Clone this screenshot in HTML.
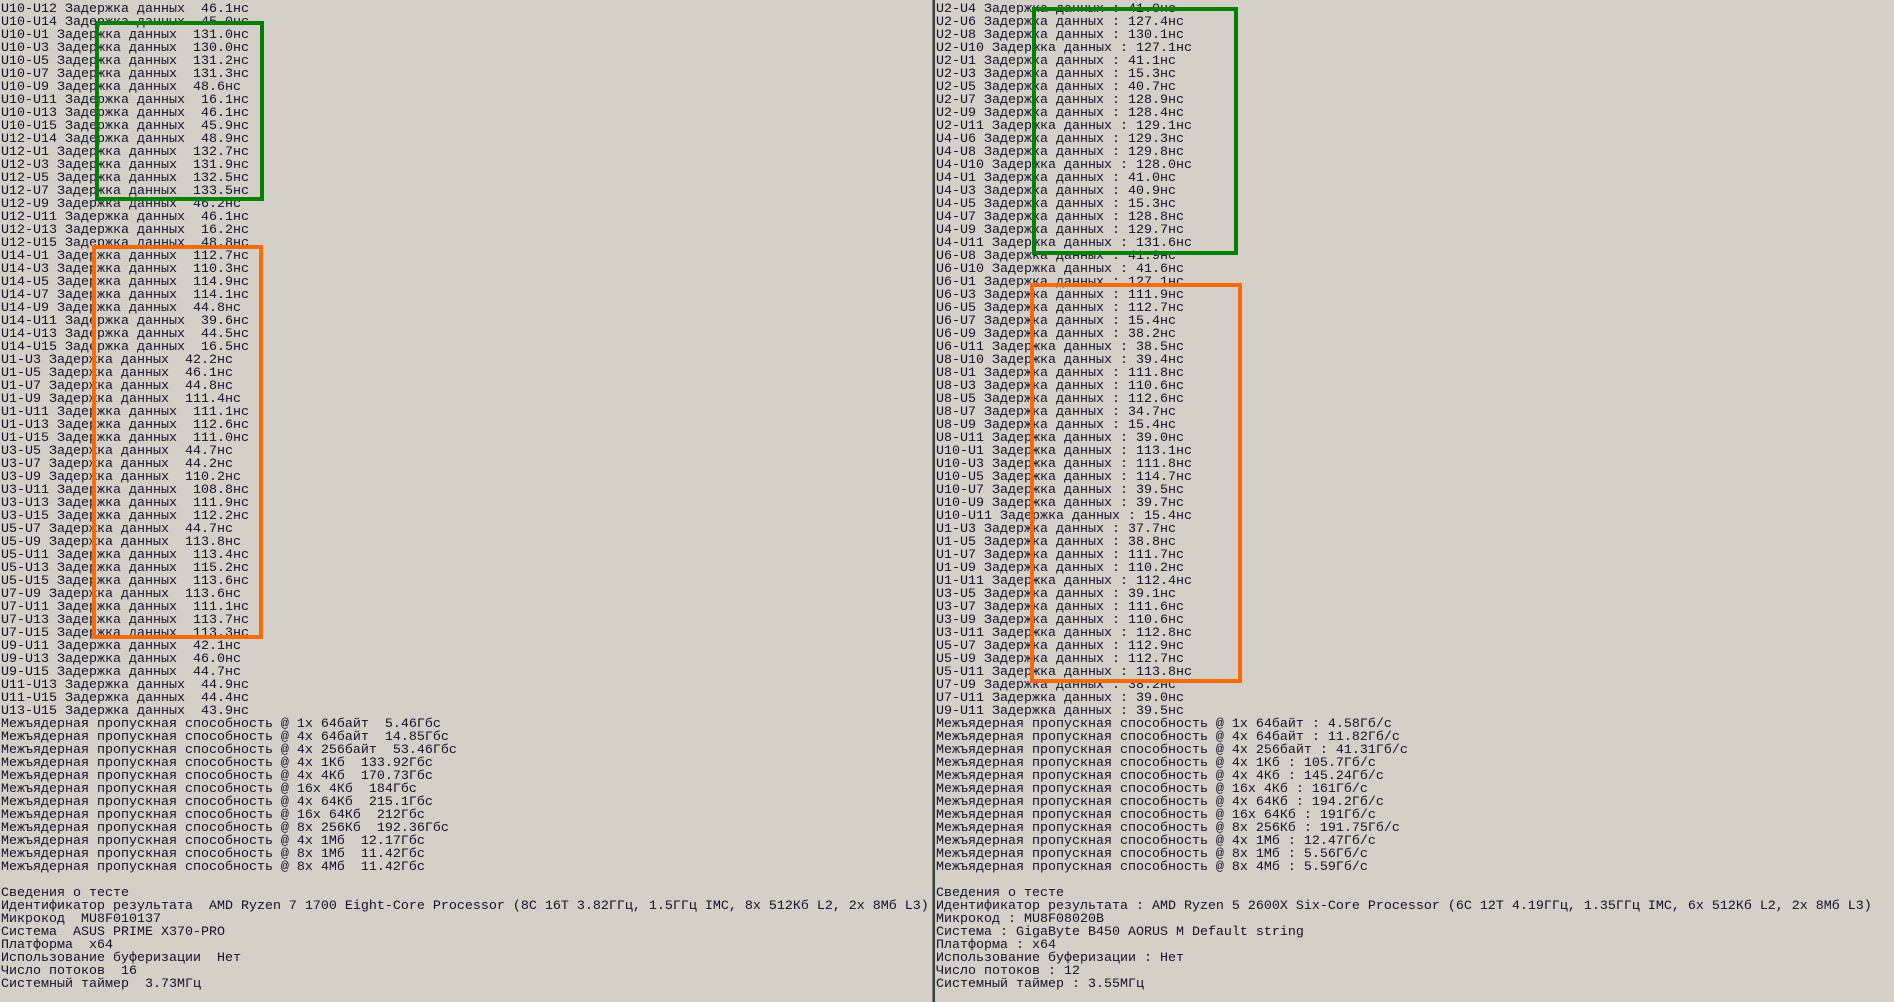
<!DOCTYPE html>
<html><head><meta charset="utf-8"><style>
html,body{margin:0;padding:0;}
body{width:1894px;height:1002px;background:#d4d0c8;position:relative;overflow:hidden;}
pre{position:absolute;top:3px;margin:0;font-family:"Liberation Mono","DejaVu Sans Mono",monospace;font-size:13.33px;line-height:13px;color:#10102a;white-space:pre;}
#l{left:1px;}
#r{left:936px;}
.div{position:absolute;left:932px;top:0;width:1px;height:1002px;background:#808080;}
.div2{position:absolute;left:933px;top:0;width:2px;height:1002px;background:#404040;}
.box{position:absolute;box-sizing:border-box;border:4px solid;}
.g{border-color:#008000;}
.o{border-color:#ff6a00;}
</style></head><body>
<div class="div"></div><div class="div2"></div>
<pre id="l">U10-U12 Задержка данных  46.1нс
U10-U14 Задержка данных  45.0нс
U10-U1 Задержка данных  131.0нс
U10-U3 Задержка данных  130.0нс
U10-U5 Задержка данных  131.2нс
U10-U7 Задержка данных  131.3нс
U10-U9 Задержка данных  48.6нс
U10-U11 Задержка данных  16.1нс
U10-U13 Задержка данных  46.1нс
U10-U15 Задержка данных  45.9нс
U12-U14 Задержка данных  48.9нс
U12-U1 Задержка данных  132.7нс
U12-U3 Задержка данных  131.9нс
U12-U5 Задержка данных  132.5нс
U12-U7 Задержка данных  133.5нс
U12-U9 Задержка данных  46.2нс
U12-U11 Задержка данных  46.1нс
U12-U13 Задержка данных  16.2нс
U12-U15 Задержка данных  48.8нс
U14-U1 Задержка данных  112.7нс
U14-U3 Задержка данных  110.3нс
U14-U5 Задержка данных  114.9нс
U14-U7 Задержка данных  114.1нс
U14-U9 Задержка данных  44.8нс
U14-U11 Задержка данных  39.6нс
U14-U13 Задержка данных  44.5нс
U14-U15 Задержка данных  16.5нс
U1-U3 Задержка данных  42.2нс
U1-U5 Задержка данных  46.1нс
U1-U7 Задержка данных  44.8нс
U1-U9 Задержка данных  111.4нс
U1-U11 Задержка данных  111.1нс
U1-U13 Задержка данных  112.6нс
U1-U15 Задержка данных  111.0нс
U3-U5 Задержка данных  44.7нс
U3-U7 Задержка данных  44.2нс
U3-U9 Задержка данных  110.2нс
U3-U11 Задержка данных  108.8нс
U3-U13 Задержка данных  111.9нс
U3-U15 Задержка данных  112.2нс
U5-U7 Задержка данных  44.7нс
U5-U9 Задержка данных  113.8нс
U5-U11 Задержка данных  113.4нс
U5-U13 Задержка данных  115.2нс
U5-U15 Задержка данных  113.6нс
U7-U9 Задержка данных  113.6нс
U7-U11 Задержка данных  111.1нс
U7-U13 Задержка данных  113.7нс
U7-U15 Задержка данных  113.3нс
U9-U11 Задержка данных  42.1нс
U9-U13 Задержка данных  46.0нс
U9-U15 Задержка данных  44.7нс
U11-U13 Задержка данных  44.9нс
U11-U15 Задержка данных  44.4нс
U13-U15 Задержка данных  43.9нс
Межъядерная пропускная способность @ 1x 64байт  5.46Гбс
Межъядерная пропускная способность @ 4x 64байт  14.85Гбс
Межъядерная пропускная способность @ 4x 256байт  53.46Гбс
Межъядерная пропускная способность @ 4x 1Кб  133.92Гбс
Межъядерная пропускная способность @ 4x 4Кб  170.73Гбс
Межъядерная пропускная способность @ 16x 4Кб  184Гбс
Межъядерная пропускная способность @ 4x 64Кб  215.1Гбс
Межъядерная пропускная способность @ 16x 64Кб  212Гбс
Межъядерная пропускная способность @ 8x 256Кб  192.36Гбс
Межъядерная пропускная способность @ 4x 1Мб  12.17Гбс
Межъядерная пропускная способность @ 8x 1Мб  11.42Гбс
Межъядерная пропускная способность @ 8x 4Мб  11.42Гбс

Сведения о тесте
Идентификатор результата  AMD Ryzen 7 1700 Eight-Core Processor (8C 16T 3.82ГГц, 1.5ГГц IMC, 8x 512Кб L2, 2x 8Мб L3)
Микрокод  MU8F010137
Система  ASUS PRIME X370-PRO
Платформа  x64
Использование буферизации  Нет
Число потоков  16
Системный таймер  3.73МГц</pre>
<pre id="r">U2-U4 Задержка данных : 41.0нс
U2-U6 Задержка данных : 127.4нс
U2-U8 Задержка данных : 130.1нс
U2-U10 Задержка данных : 127.1нс
U2-U1 Задержка данных : 41.1нс
U2-U3 Задержка данных : 15.3нс
U2-U5 Задержка данных : 40.7нс
U2-U7 Задержка данных : 128.9нс
U2-U9 Задержка данных : 128.4нс
U2-U11 Задержка данных : 129.1нс
U4-U6 Задержка данных : 129.3нс
U4-U8 Задержка данных : 129.8нс
U4-U10 Задержка данных : 128.0нс
U4-U1 Задержка данных : 41.0нс
U4-U3 Задержка данных : 40.9нс
U4-U5 Задержка данных : 15.3нс
U4-U7 Задержка данных : 128.8нс
U4-U9 Задержка данных : 129.7нс
U4-U11 Задержка данных : 131.6нс
U6-U8 Задержка данных : 41.9нс
U6-U10 Задержка данных : 41.6нс
U6-U1 Задержка данных : 127.1нс
U6-U3 Задержка данных : 111.9нс
U6-U5 Задержка данных : 112.7нс
U6-U7 Задержка данных : 15.4нс
U6-U9 Задержка данных : 38.2нс
U6-U11 Задержка данных : 38.5нс
U8-U10 Задержка данных : 39.4нс
U8-U1 Задержка данных : 111.8нс
U8-U3 Задержка данных : 110.6нс
U8-U5 Задержка данных : 112.6нс
U8-U7 Задержка данных : 34.7нс
U8-U9 Задержка данных : 15.4нс
U8-U11 Задержка данных : 39.0нс
U10-U1 Задержка данных : 113.1нс
U10-U3 Задержка данных : 111.8нс
U10-U5 Задержка данных : 114.7нс
U10-U7 Задержка данных : 39.5нс
U10-U9 Задержка данных : 39.7нс
U10-U11 Задержка данных : 15.4нс
U1-U3 Задержка данных : 37.7нс
U1-U5 Задержка данных : 38.8нс
U1-U7 Задержка данных : 111.7нс
U1-U9 Задержка данных : 110.2нс
U1-U11 Задержка данных : 112.4нс
U3-U5 Задержка данных : 39.1нс
U3-U7 Задержка данных : 111.6нс
U3-U9 Задержка данных : 110.6нс
U3-U11 Задержка данных : 112.8нс
U5-U7 Задержка данных : 112.9нс
U5-U9 Задержка данных : 112.7нс
U5-U11 Задержка данных : 113.8нс
U7-U9 Задержка данных : 38.2нс
U7-U11 Задержка данных : 39.0нс
U9-U11 Задержка данных : 39.5нс
Межъядерная пропускная способность @ 1x 64байт : 4.58Гб/с
Межъядерная пропускная способность @ 4x 64байт : 11.82Гб/с
Межъядерная пропускная способность @ 4x 256байт : 41.31Гб/с
Межъядерная пропускная способность @ 4x 1Кб : 105.7Гб/с
Межъядерная пропускная способность @ 4x 4Кб : 145.24Гб/с
Межъядерная пропускная способность @ 16x 4Кб : 161Гб/с
Межъядерная пропускная способность @ 4x 64Кб : 194.2Гб/с
Межъядерная пропускная способность @ 16x 64Кб : 191Гб/с
Межъядерная пропускная способность @ 8x 256Кб : 191.75Гб/с
Межъядерная пропускная способность @ 4x 1Мб : 12.47Гб/с
Межъядерная пропускная способность @ 8x 1Мб : 5.56Гб/с
Межъядерная пропускная способность @ 8x 4Мб : 5.59Гб/с

Сведения о тесте
Идентификатор результата : AMD Ryzen 5 2600X Six-Core Processor (6C 12T 4.19ГГц, 1.35ГГц IMC, 6x 512Кб L2, 2x 8Мб L3)
Микрокод : MU8F08020B
Система : GigaByte B450 AORUS M Default string
Платформа : x64
Использование буферизации : Нет
Число потоков : 12
Системный таймер : 3.55МГц</pre>
<div class="box g" style="left:95px;top:21px;width:169px;height:180px"></div>
<div class="box o" style="left:92px;top:245px;width:171px;height:394px"></div>
<div class="box g" style="left:1032px;top:7px;width:206px;height:248px"></div>
<div class="box o" style="left:1030px;top:283px;width:212px;height:400px"></div>
</body></html>
